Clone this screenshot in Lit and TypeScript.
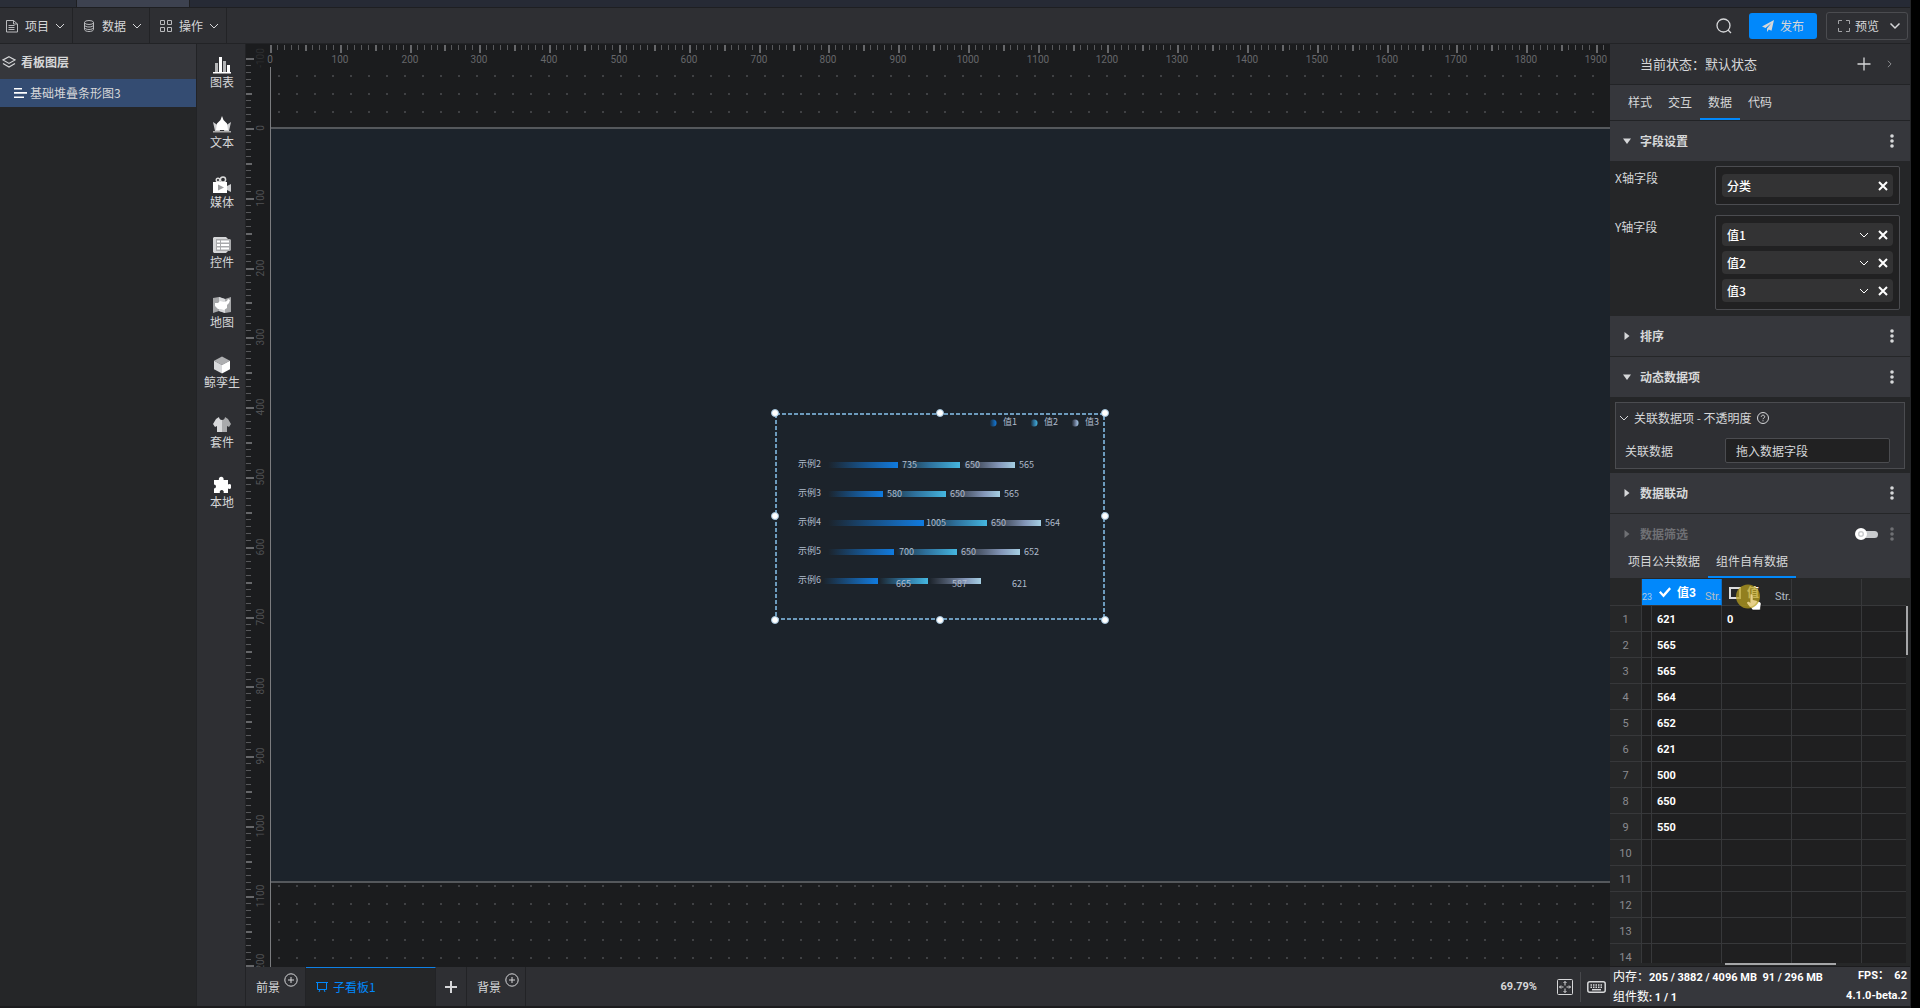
import { LitElement, html, svg, css, nothing } from "lit";
import { customElement, property, state } from "lit/decorators.js";
import { classMap } from "lit/directives/class-map.js";

const SCALE = 0.6979;

/* ---------- icons ---------- */
const chevron = html`<svg class="chev" viewBox="0 0 10 10" width="10" height="10" fill="none" stroke="currentColor"><path d="M1 3l4 4 4-4" /></svg>`;
const dots = html`<svg viewBox="0 0 6 16" width="6" height="16" fill="currentColor"><circle cx="3" cy="3" r="1.8" /><circle cx="3" cy="8" r="1.8" /><circle cx="3" cy="13" r="1.8" /></svg>`;
const cross = html`<svg viewBox="0 0 10 10" width="10" height="10" fill="none" stroke="currentColor" stroke-width="2"><path d="M1 1l8 8M9 1L1 9" /></svg>`;
const circledPlus = html`<svg class="cplus" viewBox="0 0 14 14" width="14" height="14" fill="none" stroke="currentColor"><circle cx="7" cy="7" r="6.2" /><path d="M4 7h6M7 4v6" /></svg>`;

const menuIcons = {
  file: html`<svg viewBox="0 0 14 14" width="14" height="14" fill="none" stroke="currentColor"><path d="M1.5 1.5h7l4 3.5v8h-11zM8.5 1.5V5h4M3.5 6.5h6M3.5 8.5h6M3.5 10.5h6" /></svg>`,
  db: html`<svg viewBox="0 0 14 14" width="14" height="14" fill="none" stroke="currentColor"><ellipse cx="7" cy="3.5" rx="4.5" ry="2" /><path d="M2.5 3.5v7c0 1.1 2 2 4.5 2s4.5-.9 4.5-2v-7M2.5 6c0 1.1 2 2 4.5 2s4.5-.9 4.5-2M2.5 8.5c0 1.1 2 2 4.5 2s4.5-.9 4.5-2" /></svg>`,
  grid: html`<svg viewBox="0 0 14 14" width="14" height="14" fill="none" stroke="currentColor"><path d="M1.5 1.5h4v4h-4zM8.5 1.5h4v4h-4zM1.5 8.5h4v4h-4zM8.5 8.5h4v4h-4z" /></svg>`,
};

const railItems = [
  { label: "图表", art: svg`<path fill="#b4b5b7" d="M2 7h3v9H2zM10 5h3v11h-3z"/><path fill="#fff" d="M6 1h3v15H6zM14 9h3v7h-3zM0 16h18v1.5H0z"/>` },
  { label: "文本", art: svg`<path fill="#cfd0d2" d="M0 6l6 4 1 5H2zM18 6l-6 4-1 5h5z"/><path fill="#fff" d="M9 0l1.5 4L14 7.5 15 14H3l1-6.5L7.5 4z"/><path fill="#aaa" d="M0 15h18v1.5H0z"/>` },
  { label: "媒体", art: svg`<circle cx="5" cy="4" r="1.8" fill="none" stroke="#ddd" stroke-width="1.4"/><circle cx="10" cy="3.5" r="2.6" fill="none" stroke="#ddd" stroke-width="1.5"/><path fill="#fff" d="M0 6h14v11H0z"/><path fill="#cfd0d2" d="M14 10l4-2v8l-4-2z"/><path fill="#9a9b9d" d="M5 8.5l6 3-6 3z"/>` },
  { label: "控件", art: svg`<path fill="#d5d6d8" d="M1 1h12l2 2v12l-2 2H1l-1-1V2z"/><path fill="#a9aaac" d="M3 3h14l1 1v10l-1 1H3z"/><path fill="#fff" d="M4 4.5h12v2H4zM4 8h12v2H4zM4 11.5h12v2H4z"/><path stroke="#a9aaac" d="M7.5 4v10"/>` },
  { label: "地图", art: svg`<path fill="#a6a7a9" d="M0 2l6-1 6 2 6-2v15l-6 1-6-2-6 2z"/><path fill="#d8d9db" d="M6 1l6 2v14l-6-2z"/><path fill="#fff" d="M2 7h3l2-2 4 1 3-1 1-2 2 1-1 3-2 2v3l-3 2-3-1H5l-3-3z"/>` },
  { label: "鲸孪生", art: svg`<path fill="#aeafb1" d="M9 .5l8 4.2-8 4.3-8-4.3z"/><path fill="#d9dadc" d="M1 4.700L9 9v8.500l-8-4.300z"/><path fill="#fff" d="M17 4.700L9 9v8.500l8-4.300z"/>` },
  { label: "套件", art: svg`<path fill="#d8d9db" d="M9 4C7 4 6 2 6 1L3 3 0 8l2 3 2-1v6h5z"/><path fill="#a9aaac" d="M9 4c2 0 3-2 3-3l3 2 3 5-2 3-2-1v6H9z"/>` },
  { label: "本地", art: svg`<path fill="#fff" d="M1 4h5a2.400 2.400 0 1 1 4.500 0H15v4.500a2.400 2.400 0 1 1 0 4V17h-4.500a2 2 0 1 0-3.500 0H1v-4.500a2 2 0 1 0 0-4z"/>` },
];

/* ---------- ruler ---------- */
@customElement("scale-ruler")
export class ScaleRuler extends LitElement {
  @property({ type: Boolean, reflect: true }) vertical = false;
  @property({ type: Number }) origin = 0;
  @property({ type: Number }) from = 0;
  @state() private extent = 0;
  private observer = new ResizeObserver(() => this.measure());

  static styles = css`
    :host { display: block; overflow: hidden; min-width: 0; min-height: 0; }
    svg { display: block; overflow: visible; }
    text { font: 10px "Roboto", sans-serif; fill: #66676a; text-anchor: middle; }
    :host([vertical]) text { fill: #505154; }
    :host([vertical]) text.dim { fill: #2e2f31; }
  `;

  connectedCallback() {
    super.connectedCallback();
    this.observer.observe(this);
  }

  disconnectedCallback() {
    this.observer.disconnect();
    super.disconnectedCallback();
  }

  private measure() {
    this.extent = this.vertical ? this.clientHeight : this.clientWidth;
  }

  render() {
    const ticks = [];
    const last = Math.floor((this.extent - this.origin) / (10 * SCALE));
    for (let i = this.from; i <= last; i++) {
      const p = Math.round(this.origin + i * 10 * SCALE);
      const major = i % 10 === 0;
      const mid = i % 5 === 0;
      const len = major ? 8 : mid ? 6 : 5;
      const w = mid ? 2 : 1;
      const tone = mid ? "#66676a" : "#58595c";
      ticks.push(this.vertical
        ? svg`<rect x="0" y=${p} width=${len} height=${w} fill=${tone}></rect>`
        : svg`<rect x=${p} y="1" width=${w} height=${len} fill=${tone}></rect>`);
      if (major)
        ticks.push(this.vertical
          ? svg`<text class=${i < 0 ? "dim" : ""} transform=${`translate(18 ${p}) rotate(-90)`}>${i * 10}</text>`
          : svg`<text x=${p} y="19">${i * 10}</text>`);
    }
    return html`<svg width="24" height="23" aria-hidden="true">${ticks}</svg>`;
  }
}

/* ---------- stacked bar widget ---------- */
const rows = [
  { name: "示例2", y: 62, start: 63, ends: [133, 195, 250], values: [735, 650, 565], lx: [137, 200, 254] },
  { name: "示例3", y: 91, start: 63, ends: [118, 181, 235], values: [580, 650, 565], lx: [122, 185, 239] },
  { name: "示例4", y: 120, start: 63, ends: [159, 222, 276], values: [1005, 650, 564], lx: [161, 226, 280] },
  { name: "示例5", y: 149, start: 63, ends: [129, 192, 255], values: [700, 650, 652], lx: [134, 196, 259] },
  { name: "示例6", y: 178, start: 58, ends: [113, 163, 216], values: [665, 587, 621], lx: [131, 187, 247], drop: 3 },
];

@customElement("stacked-bars")
export class StackedBars extends LitElement {
  static styles = css`
    :host { display: block; }
    svg { display: block; }
    text { font: 9px "Noto Sans CJK SC", sans-serif; fill: #b0bccd; }
  `;
  render() {
    return html`<svg width="350" height="227" viewBox="0 0 350 227" role="img" aria-label="基础堆叠条形图3">
      <defs>
        <linearGradient id="g0"><stop offset="0" stop-color="#1279d8" stop-opacity="0" /><stop offset=".8" stop-color="#1473cd" stop-opacity=".9" /><stop offset="1" stop-color="#0f7be0" /></linearGradient>
        <linearGradient id="g1"><stop offset="0" stop-color="#2f7fae" stop-opacity="0" /><stop offset=".5" stop-color="#3079a8" stop-opacity=".9" /><stop offset="1" stop-color="#45b7e0" /></linearGradient>
        <linearGradient id="g2"><stop offset="0" stop-color="#8290ad" stop-opacity="0" /><stop offset=".7" stop-color="#8fa3c8" stop-opacity=".9" /><stop offset="1" stop-color="#a5cfe3" /></linearGradient>
      </defs>
      ${["值1", "值2", "值3"].map((t, i) => svg`<circle cx=${228 + i * 41} cy="20" r="3.5" fill=${`url(#g${i})`}></circle><text x=${238 + i * 41} y="22">${t}</text>`)}
      ${rows.map((r) => svg`
        <text x="33" y=${r.y + 2}>${r.name}</text>
        ${r.ends.map((e, i) => {
          const s = i ? r.ends[i - 1] + 1 : r.start;
          return svg`<rect x=${s} y=${r.y - 3} width=${e - s} height="6" fill=${`url(#g${i})`}></rect>`;
        })}
        ${r.values.map((v, i) => svg`<text x=${r.lx[i]} y=${r.y + 3 + (r.drop ?? 0)}>${v}</text>`)}`)}
      <rect x="11" y="11" width="328" height="205" fill="none" stroke="#6d9bbd" stroke-width="2" stroke-dasharray="4 2"></rect>
      ${[10, 175, 340].flatMap((x) => [10, 113, 217].map((y) => x === 175 && y === 113 ? nothing
        : svg`<circle cx=${x} cy=${y} r="3.5" fill="#fff" stroke="#9dc0da"></circle>`))}
    </svg>`;
  }
}

/* ---------- page ---------- */
const tableValues = ["621", "565", "565", "564", "652", "621", "500", "650", "550", "", "", "", "", ""];

@customElement("app-root")
export class AppRoot extends LitElement {
  static styles = css`
    :host {
      display: flex; height: 100vh; box-sizing: border-box; padding-right: 9px; background: #000;
      font: 12px/16px "Noto Sans CJK SC", sans-serif; color: #d6d7d9;
    }
    *, *::before, *::after { box-sizing: border-box; }
    button, input { font: inherit; color: inherit; margin: 0; padding: 0; border: 0; border-radius: 0; background: none; }
    button { display: inline-flex; align-items: center; cursor: pointer; }
    svg { flex: none; display: block; }
    h2, h3 { margin: 0; font-size: 12px; line-height: 16px; font-weight: 700; }
    .num { font-family: "Roboto", "Noto Sans CJK SC", sans-serif; font-size: 11px; font-weight: 700; }

    .app { flex: 1; min-width: 0; display: flex; flex-direction: column; border-right: 1px solid #242528; border-bottom: 2px solid #1c1c1e; background: #252628; }
    .strip { height: 8px; flex: none; display: flex; background: #262a35; border-bottom: 1px solid #1e1f22; }
    .strip .idle { width: 77px; border-right: 1px solid #1e1f22; background: #2a2e38; }
    .strip .open { width: 113px; border-right: 1px solid #1e1f22; background: #3d4250; }

    .bar { height: 36px; flex: none; display: flex; align-items: center; background: #2e2f33; border-bottom: 1px solid #222326; }
    .menu { height: 100%; width: 77px; padding-left: 9px; gap: 6px; border-right: 1px solid #222326; }
    .menu:first-child { width: 73px; padding-left: 5px; }
    .menu svg:first-child { color: #b9babd; }
    .grow { flex: 1; }
    .search { margin-right: 17px; }
    .publish { height: 26px; width: 68px; gap: 6px; justify-content: center; border-radius: 3px; background: #0188fb; margin-right: 9px; }
    .preview { height: 28px; width: 82px; padding-left: 11px; gap: 5px; border: 1px solid #4b4c50; border-radius: 3px; margin-right: 2px; }
    .preview .chev { margin-left: 5px; }

    .body { flex: 1; min-height: 0; display: flex; }
    .layers { width: 197px; flex: none; background: #252628; border-right: 1px solid #222326; }
    .layers header { height: 35px; display: flex; align-items: center; gap: 5px; padding-left: 2px; background: #36373c; }
    .layer { width: 100%; height: 28px; padding-left: 14px; gap: 3px; background: #344c72; }
    .rail { width: 49px; flex: none; display: flex; flex-direction: column; align-items: center; padding: 12px 0 0 2px; background: #2e2f33; border-right: 1px solid #222326; }
    .rail button { flex-direction: column; height: 60px; white-space: nowrap; }

    .center { flex: 1; min-width: 0; display: flex; flex-direction: column; }
    .stage { flex: 1; min-height: 0; display: grid; grid-template: 23px 1fr / 24px 1fr; background: #1b1c1e; }
    .stage .top { grid-column: 1 / 3; grid-row: 1; }
    .stage .side { grid-column: 1; grid-row: 1 / 3; }
    .area {
      grid-column: 2; grid-row: 2; overflow: hidden; padding-top: 60px; border-left: 1px solid #7b7c7f;
      background: radial-gradient(circle 1px at 8px 9px, #404144 99%, transparent) 0 0 / 18px 18px #1b1c1e;
    }
    .board { position: relative; background: #1c232b; border: solid #55585c; border-width: 2px 0; }
    .board stacked-bars { position: absolute; left: 494px; top: 274px; }

    .dock { height: 39px; flex: none; display: flex; align-items: center; background: #2e2f33; }
    .dock button { height: 100%; }
    .scene { padding-left: 10px; width: 60px; gap: 4px; border-right: 1px solid #222326; }
    .dock .back { width: 59px; }
    .cplus { align-self: flex-start; margin-top: 6px; }
    .dock .on { width: 130px; padding-left: 10px; gap: 5px; color: #0188fb; background: #252628; border-top: 1px solid #0f80e6; border-right: 1px solid #222326; }
    .dock .add { width: 31px; justify-content: center; border-right: 1px solid #222326; }
    .zoom { margin-right: 20px; }
    .dock .fit { height: 30px; padding-right: 7px; border-right: 1px solid #47484c; margin-right: 6px; }
    .dock .keys { margin-right: 4px; }

    .panel { width: 300px; flex: none; display: flex; flex-direction: column; background: #252628; }
    .state { height: 41px; flex: none; display: flex; align-items: center; padding: 0 18px 1px 30px; font-size: 13px; background: #2e2f33; border-bottom: 1px solid #222326; }
    .state button + button { margin-left: 16px; }
    .tabs { display: flex; flex: none; background: #36373c; }
    .tabs button { padding: 0 8px 2px; }
    .tabs .on { box-shadow: inset 0 -2px #0188fb; }
    .main { height: 36px; padding-left: 10px; border-bottom: 1px solid #222326; }
    .own { height: 24px; padding-left: 10px; }
    .own button { height: 24px; padding-bottom: 10px; }

    .sect { height: 41px; flex: none; display: flex; align-items: center; padding: 0 15px 0 13px; background: #36373c; border-bottom: 1px solid #252628; }
    .sect button:first-child { flex: 1; gap: 9px; height: 100%; }
    .off .fade { color: #6f7074; }
    .off { height: 40px; border: 0; }
    .toggle { appearance: none; position: relative; width: 23px; height: 12px; margin-right: 11px; }
    .toggle::before { content: ""; position: absolute; inset: 3px 0 2px 8px; border-radius: 4px; background: #c9cbcd; }
    .toggle::after { content: ""; position: absolute; left: 0; top: 0; width: 12px; height: 12px; border-radius: 50%; border: 3px solid #fff; background: radial-gradient(#fff 1px, #c9cbcd 2px); }

    .fields { display: grid; grid-template-columns: 100px 1fr; row-gap: 10px; padding: 4px 10px 6px 5px; }
    .fields .name { padding-top: 4px; }
    .slots { display: flex; flex-direction: column; gap: 5px; padding: 7px 6px; border: 1px solid #4b4c50; border-radius: 2px; background: #212122; }
    .chip { height: 23px; display: flex; align-items: center; padding: 0 5px; color: #fff; font-weight: 500; border-radius: 4px; background: #333334; }
    .chip span { flex: 1; }
    .chip button + button { margin-left: 9px; }

    .bind { margin: 4px 5px; padding: 7px 14px 5px 9px; border: 1px solid #4b4c50; background: #2e2f33; display: flex; flex-direction: column; gap: 12px; }
    .bind .title { gap: 5px; margin-left: -6px; }
    .bind .row { display: flex; align-items: center; }
    .bind label { width: 100px; }
    .bind input { flex: 1; min-width: 0; height: 25px; padding-left: 10px; border: 1px solid #4b4c50; border-radius: 2px; background: #212122; }
    .bind input::placeholder { color: #d6d7d9; opacity: 1; }

    .sheet { flex: 1; min-height: 0; position: relative; padding: 1px 4px 0 0; background: #262728; border-bottom: 1px solid #1c1c1e; }
    .clip { height: 100%; overflow: hidden; border-bottom: 3px solid #262728; }
    table { width: 100%; table-layout: fixed; border-collapse: separate; border-spacing: 0; background: #1f1f20; }
    th, td { height: 26px; padding: 3px 0 0 5px; border: solid #37383a; border-width: 0 1px 1px 0; text-align: left; line-height: 16px; color: #fff; white-space: nowrap; }
    tr > :last-child { border-right: 0; }
    thead th { height: 27px; padding-top: 1px; background: #262728; }
    thead th.sel { background: #0188fb; border-right-color: #0c6fc8; }
    tbody th { padding-left: 0; text-align: center; font-weight: 400; color: #8a8b90; background: #262728; }
    thead th.tail { padding: 9px 0 0 0; font-size: 9px; font-weight: 400; border-right: 0; color: #a9c9e8; }
    .c0 { width: 32px; } .c1 { width: 10px; } .c2 { width: 70px; }
    .head { display: flex; align-items: center; gap: 6px; padding-left: 2px; }
    .head .type { flex: 1; text-align: right; padding-top: 8px; font-weight: 400; color: #b4bdc6; }
    .head label { font-size: 12px; font-weight: 700; }
    .head input { appearance: none; width: 12px; height: 12px; border: 2px solid #ddd; flex: none; }
    .head input:checked { border: 0; background: #fff; clip-path: polygon(0 50%, 14% 38%, 36% 62%, 86% 6%, 100% 20%, 38% 92%); }
    .vbar { position: absolute; right: 2px; top: 28px; width: 2px; height: 49px; background: #a5a6a8; }
    .hbar { position: absolute; left: 115px; bottom: 1px; width: 111px; height: 2px; background: #a5a6a8; }
    .pointer { position: absolute; left: 126px; top: 6px; }

    .status { height: 39px; flex: none; display: flex; flex-direction: column; justify-content: space-between; padding: 1px 3px 0; background: #36373c; color: #fff; }
    .status div { display: flex; justify-content: space-between; white-space: pre; }
    .status b { font: 12px/16px "Noto Sans CJK SC", sans-serif; }
  `;

  private section(title: string, open: boolean) {
    return html`<div class="sect">
      <button aria-expanded=${open}>${this.caret(open)}<h3>${title}</h3></button>
      <button aria-label="更多">${dots}</button>
    </div>`;
  }

  private caret(open: boolean) {
    return html`<svg viewBox="0 0 8 8" width="8" height="8" fill="currentColor"><path d=${open ? "M0 1.5h8L4 7z" : "M1.5 0v8L6.5 4z"} /></svg>`;
  }

  private chip(name: string, menu: boolean) {
    return html`<div class="chip"><span>${name}</span>
      ${menu ? html`<button aria-label="设置">${chevron}</button>` : nothing}
      <button aria-label="移除">${cross}</button></div>`;
  }

  render() {
    return html`<div class="app">
      <div class="strip"><div class="idle"></div><div class="open"></div></div>
      <nav class="bar">
        <button class="menu">${menuIcons.file}项目${chevron}</button>
        <button class="menu">${menuIcons.db}数据${chevron}</button>
        <button class="menu">${menuIcons.grid}操作${chevron}</button>
        <div class="grow"></div>
        <button class="search" aria-label="搜索"><svg viewBox="0 0 16 16" width="16" height="16" fill="none" stroke="currentColor" stroke-width="1.3"><circle cx="7.5" cy="7.5" r="6.5" /><path d="M12 12l3 3" /></svg></button>
        <button class="publish"><svg viewBox="0 0 12 12" width="12" height="12" fill="currentColor"><path d="M12 0L0 6.5l3.5 1.5L9.500 3 5 8.500V12l1.800-2.400 2.700 1.200z" /></svg>发布</button>
        <button class="preview"><svg viewBox="0 0 12 12" width="12" height="12" fill="none" stroke="#a3a4a7"><path d="M.5 4V.5H4M8 .5h3.500V4M11.500 8v3.500H8M4 11.500H.5V8" /></svg>预览<svg class="chev" viewBox="0 0 12 10" width="12" height="10" fill="none" stroke="currentColor" stroke-width="1.5"><path d="M1.500 2.500L6 7l4.500-4.500" /></svg></button>
      </nav>
      <div class="body">
        <aside class="layers">
          <header><svg viewBox="0 0 14 12" width="14" height="12" fill="none" stroke="currentColor" stroke-width="1.2"><path d="M7 .8L13 4 7 7.400 1 4zM1 7.500l6 3.500 6-3.500" /></svg><h2>看板图层</h2></header>
          <button class="layer"><svg viewBox="0 0 13 10" width="13" height="10" fill="#fff"><path d="M0 0h8v1.500H0zM0 4h13v1.800H0zM0 8.500h10V10H0z" /></svg>基础堆叠条形图3</button>
        </aside>
        <nav class="rail">
          ${railItems.map((r) => html`<button><svg viewBox="0 0 18 18" width="18" height="18">${r.art}</svg>${r.label}</button>`)}
        </nav>
        <main class="center">
          <div class="stage">
            <scale-ruler class="side" vertical .origin=${84} .from=${-10}></scale-ruler>
            <scale-ruler class="top" .origin=${24} .from=${0}></scale-ruler>
            <div class="area">
              <div class="board" style=${`height:${Math.round(1083 * SCALE)}px`}><stacked-bars></stacked-bars></div>
            </div>
          </div>
          <div class="dock">
            <button class="scene">前景${circledPlus}</button>
            <button class="on"><svg viewBox="0 0 12 12" width="12" height="12" fill="none" stroke="currentColor"><path d="M0 1.500h12M1.500 1.500v7h9v-7M4 8.500L3 11M8 8.500L9 11" /></svg>子看板1</button>
            <button class="add" aria-label="新增看板"><svg viewBox="0 0 12 12" width="12" height="12" stroke="currentColor" stroke-width="2"><path d="M0 6h12M6 0v12" /></svg></button>
            <button class="scene back">背景${circledPlus}</button>
            <div class="grow"></div>
            <span class="zoom num">69.79%</span>
            <button class="fit" aria-label="适应画布"><svg viewBox="0 0 16 16" width="16" height="16" fill="none" stroke="currentColor"><rect x=".5" y=".5" width="15" height="15" rx="1" /><path d="M8 2.500v4M8 9.500v4M2.500 8h4M9.500 8h4M6.500 4L8 2.500 9.500 4M6.500 12L8 13.500 9.500 12M4 6.500L2.500 8 4 9.500M12 6.500L13.500 8 12 9.500M4 4h.1M12 4h.1M4 12h.1M12 12h.1" /></svg></button>
            <button class="keys" aria-label="快捷键"><svg viewBox="0 0 19 12" width="19" height="12" fill="none" stroke="currentColor" stroke-width="1.5"><rect x=".8" y=".8" width="17.4" height="10.4" rx="2" /><path stroke-dasharray="1.5 1" d="M3.500 4h12M3.500 6.200h12" /><path d="M5 8.700h9" /></svg></button>
          </div>
        </main>
        <aside class="panel">
          <div class="state"><span>当前状态：默认状态</span><div class="grow"></div>
            <button aria-label="新增状态"><svg viewBox="0 0 14 14" width="14" height="14" stroke="currentColor" stroke-width="1.3"><path d="M.5 7h13M7 .5v13" /></svg></button>
            <button aria-label="展开"><svg viewBox="0 0 6 10" width="5" height="8" fill="none" stroke="#a3a4a7"><path d="M1 1l4 4-4 4" /></svg></button>
          </div>
          <div class="tabs main" role="tablist">
            ${["样式", "交互", "数据", "代码"].map((t) => html`<button role="tab" class=${classMap({ on: t === "数据" })}>${t}</button>`)}
          </div>
          ${this.section("字段设置", true)}
          <div class="fields">
            <div class="name">X轴字段</div><div class="slots">${this.chip("分类", false)}</div>
            <div class="name">Y轴字段</div><div class="slots">${["值1", "值2", "值3"].map((n) => this.chip(n, true))}</div>
          </div>
          ${this.section("排序", false)}
          ${this.section("动态数据项", true)}
          <div class="bind">
            <button class="title">${chevron}<span>关联数据项 - 不透明度</span><svg viewBox="0 0 12 12" width="12" height="12" fill="none" stroke="currentColor"><circle cx="6" cy="6" r="5.5" /><path d="M4.300 4.800c0-2.200 3.400-2.200 3.400 0C7.700 6 6 6 6 7.200M6 8.300v1" /></svg></button>
            <div class="row"><label for="bind">关联数据</label><input id="bind" placeholder="拖入数据字段" /></div>
          </div>
          ${this.section("数据联动", false)}
          <div class="sect off">
            <button class="fade" aria-expanded="false">${this.caret(false)}<h3>数据筛选</h3></button>
            <input class="toggle" type="checkbox" role="switch" aria-label="数据筛选" />
            <button class="fade" aria-label="更多">${dots}</button>
          </div>
          <div class="tabs own" role="tablist"><button role="tab">项目公共数据</button><button role="tab" class="on">组件自有数据</button></div>
          <div class="sheet">
            <div class="clip"><table class="num">
              <colgroup><col class="c0" /><col class="c1" /><col class="c2" /><col class="c2" /><col class="c2" /><col /></colgroup>
              <thead><tr>
                <th></th><th class="sel tail">23</th>
                <th class="sel"><div class="head"><input id="v3" type="checkbox" checked /><label for="v3">值3</label><span class="type">Str.</span></div></th>
                <th><div class="head"><input id="v4" type="checkbox" /><label for="v4">值</label><span class="type">Str.</span></div></th>
                <th></th><th></th>
              </tr></thead>
              <tbody>${tableValues.map((v, i) => html`<tr><th>${i + 1}</th><td></td><td>${v}</td><td>${i === 0 ? "0" : ""}</td><td></td><td></td></tr>`)}</tbody>
            </table></div>
            <div class="vbar"></div><div class="hbar"></div>
            <svg class="pointer" viewBox="0 0 26 28" width="26" height="28" aria-hidden="true">
              <path fill="#fff" stroke="#111" stroke-width=".6" d="M14.500 10.500c1-.8 2.200 0 2.200 1.200v4.300l6 1.400c2 .5 2.600 1.600 2.300 3.200l-.8 5.400h-7.600l-5-6.400c-.7-1.200.6-2.300 1.700-1.500l1.400 1z" />
              <circle cx="12" cy="12.5" r="12" fill="#b79d1c" fill-opacity=".75" />
              <path fill="#e6cf8a" d="M14.500 10.500c1-.8 2.200 0 2.200 1.200v4.300l4.500 1c-1.500 3-4 5.500-7.200 6l-2.700-3.400c-.7-1.200.6-2.300 1.700-1.500l1.400 1z" />
            </svg>
          </div>
          <div class="status num">
            <div><span><b>内存：</b>205 / 3882 / 4096 MB  91 / 296 MB</span><span>FPS：  62</span></div>
            <div><span><b>组件数</b>: 1 / 1</span><span>4.1.0-beta.2</span></div>
          </div>
        </aside>
      </div>
    </div>`;
  }
}
